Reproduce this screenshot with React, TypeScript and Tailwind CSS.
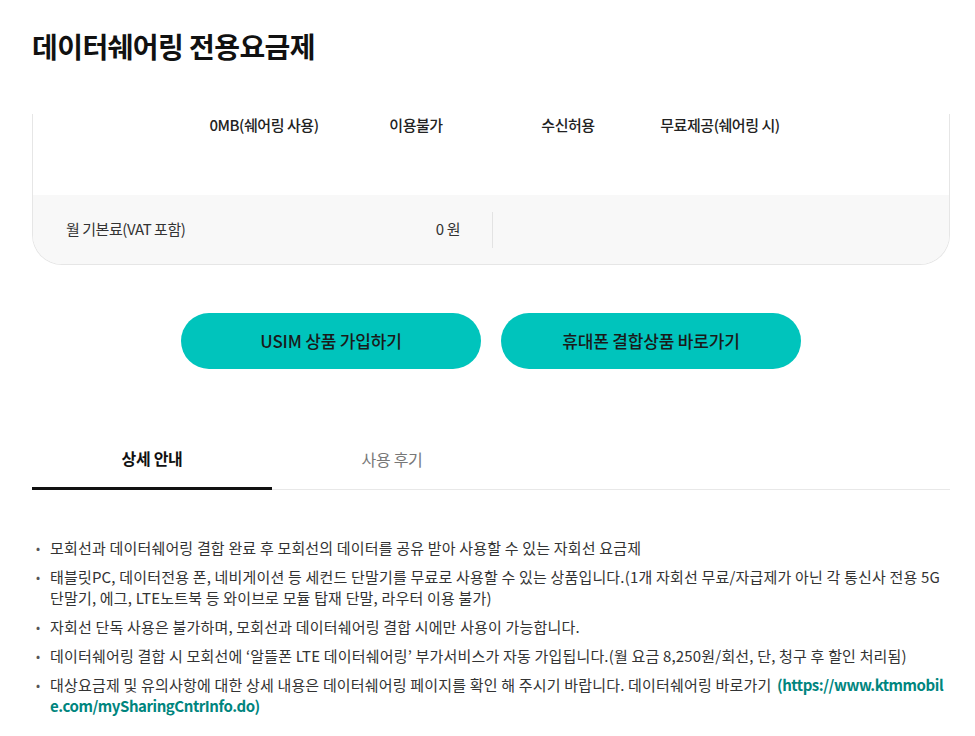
const headers = ['0MB(쉐어링 사용)', '이용불가', '수신허용', '무료제공(쉐어링 시)'];

const notes: { text: string; link?: string }[] = [
  { text: '모회선과 데이터쉐어링 결합 완료 후 모회선의 데이터를 공유 받아 사용할 수 있는 자회선 요금제' },
  {
    text: '태블릿PC, 데이터전용 폰, 네비게이션 등 세컨드 단말기를 무료로 사용할 수 있는 상품입니다.(1개 자회선 무료/자급제가 아닌 각 통신사 전용 5G 단말기, 에그, LTE노트북 등 와이브로 모듈 탑재 단말, 라우터 이용 불가)',
  },
  { text: '자회선 단독 사용은 불가하며, 모회선과 데이터쉐어링 결합 시에만 사용이 가능합니다.' },
  { text: '데이터쉐어링 결합 시 모회선에 ‘알뜰폰 LTE 데이터쉐어링’ 부가서비스가 자동 가입됩니다.(월 요금 8,250원/회선, 단, 청구 후 할인 처리됨)' },
  {
    text: '대상요금제 및 유의사항에 대한 상세 내용은 데이터쉐어링 페이지를 확인 해 주시기 바랍니다. 데이터쉐어링 바로가기 ',
    link: '(https://www.ktmmobile.com/mySharingCntrInfo.do)',
  },
];

export default function App() {
  return (
    <div className="min-h-screen bg-white pl-8 pr-[25px] pt-[26px] font-['Noto_Sans_CJK_KR',sans-serif] text-[#333]">
      <h1 className="text-[28px] font-bold leading-[40px] tracking-[-0.02em] text-[#111]">데이터쉐어링 전용요금제</h1>

      {/* rate table (scrolled, top clipped) */}
      <div className="mt-[48px] rounded-b-[30px] border-x border-b border-[#e6e6e6] overflow-hidden">
        <div className="grid h-[81px] grid-cols-[155px_152px_152px_152px_152px_1fr] items-start pt-[1px]">
          <div />
          {headers.map(h => (
            <div key={h} className="text-center text-[15px] font-medium leading-[20px] tracking-[-0.03em] text-[#222]">
              {h}
            </div>
          ))}
        </div>
        <div className="flex h-[69px] items-center bg-[#f8f8f8]">
          <div className="flex w-[459px] items-center justify-between pl-[33px] pr-[32px] text-[15px] tracking-[-0.03em] text-[#333]">
            <span>월 기본료(VAT 포함)</span>
            <span>0 원</span>
          </div>
          <div className="h-[36px] w-px bg-[#e3e3e3]" />
        </div>
      </div>

      <div className="mt-[48px] flex justify-center gap-5">
        <button className="h-[56px] w-[300px] rounded-full bg-[#00c4bc] text-[17px] font-medium tracking-[-0.01em] text-[#1a1a1a]">
          USIM 상품 가입하기
        </button>
        <button className="h-[56px] w-[300px] rounded-full bg-[#00c4bc] text-[17px] font-medium tracking-[-0.01em] text-[#1a1a1a]">
          휴대폰 결합상품 바로가기
        </button>
      </div>

      <div className="mt-[72px] flex border-b border-[#e8e8e8]">
        <div className="-mb-px flex h-[49px] w-[240px] items-center justify-center border-b-[3px] border-[#111] pb-[13px] text-[16px] font-bold tracking-[-0.02em] text-[#111]">
          상세 안내
        </div>
        <div className="flex h-[48px] w-[240px] items-center justify-center pb-[12px] text-[16px] tracking-[-0.02em] text-[#777]">
          사용 후기
        </div>
      </div>

      <ul className="mt-[47px] space-y-2">
        {notes.map(n => (
          <li key={n.text} className="relative break-keep pl-[18px] text-[15px] leading-[21px] tracking-[0.012em] text-[#333]">
            <span className="absolute left-[4px] top-0 text-[12px] text-[#555]">•</span>
            {n.text}
            {n.link && <span className="ml-[2px] break-all font-bold tracking-[-0.03em] text-[#00857e]">{n.link}</span>}
          </li>
        ))}
      </ul>
    </div>
  );
}
